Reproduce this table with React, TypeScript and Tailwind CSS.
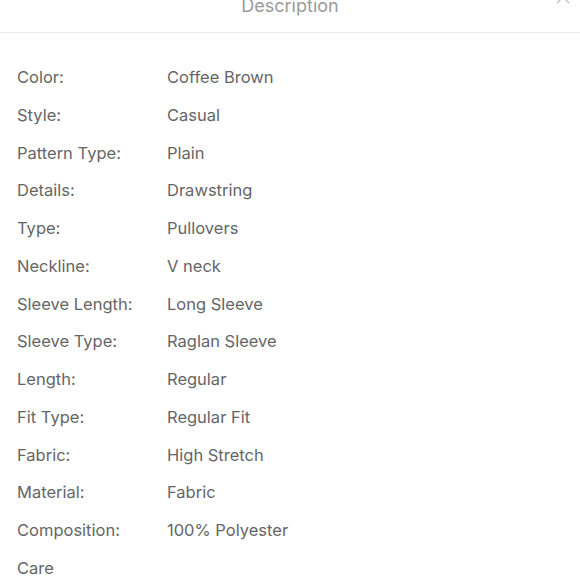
import React from "react";

const rows: [string, string][] = [
  ["Color:", "Coffee Brown"],
  ["Style:", "Casual"],
  ["Pattern Type:", "Plain"],
  ["Details:", "Drawstring"],
  ["Type:", "Pullovers"],
  ["Neckline:", "V neck"],
  ["Sleeve Length:", "Long Sleeve"],
  ["Sleeve Type:", "Raglan Sleeve"],
  ["Length:", "Regular"],
  ["Fit Type:", "Regular Fit"],
  ["Fabric:", "High Stretch"],
  ["Material:", "Fabric"],
  ["Composition:", "100% Polyester"],
];

export default function App() {
  return (
    <div className="w-[580px] h-[580px] overflow-hidden bg-white" style={{ fontFamily: "Inter, 'Liberation Sans', sans-serif" }}>
      <div className="relative h-[33px] border-b border-[#ebebeb]">
        <div className="absolute left-0 right-0 top-[-6px] text-center text-[18px] leading-[24px] text-[#9b9b9b]">Description</div>
        <svg className="absolute right-[10px] top-[-10px]" width="14" height="14" viewBox="0 0 14 14">
          <path d="M1 1L13 13M13 1L1 13" stroke="#bbbbbb" strokeWidth="1.2" />
        </svg>
      </div>
      <div className="pt-[25.6px] text-[16.5px] text-[#666666]">
        {rows.map(([k, v]) => (
          <div key={k} className="flex h-[37.75px] items-center pl-[17px]">
            <div className="w-[150px]">{k}</div>
            <div>{v}</div>
          </div>
        ))}
        <div className="flex h-[37.75px] items-center pl-[17px]">Care</div>
      </div>
    </div>
  );
}
